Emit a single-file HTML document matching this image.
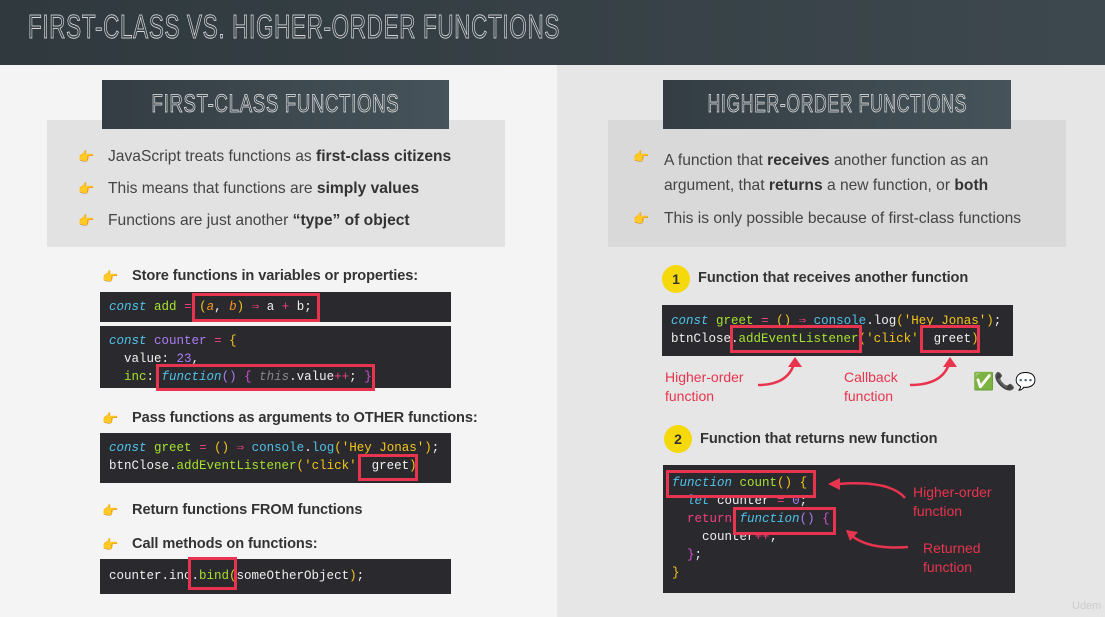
<!DOCTYPE html>
<html><head><meta charset="utf-8"><style>
*{margin:0;padding:0;box-sizing:border-box}
body{width:1105px;height:617px;overflow:hidden;position:relative;font-family:"Liberation Sans",sans-serif;background:#f4f4f4}
.abs{position:absolute}
.hdr{left:0;top:0;width:1105px;height:65px;background:linear-gradient(90deg,#2f393e,#3d484e)}
.ttl{font-family:"Liberation Sans Narrow","Liberation Sans",sans-serif;color:#3a444a;-webkit-text-stroke:0.8px #e8e8e8;letter-spacing:1px;white-space:nowrap;display:inline-block}
.right{left:557px;top:65px;width:548px;height:552px;background:#e6e6e6}
.gbox{background:#e2e2e2}
.tbox{background:linear-gradient(90deg,#333d43,#46535a);display:flex;align-items:center;justify-content:center}
.b{font-size:15.6px;color:#444;white-space:nowrap}
.b strong{color:#333}
.s{font-size:14.6px;color:#333;font-weight:bold;white-space:nowrap;letter-spacing:-0.1px}
.hand{font-size:13px;color:#f0a020}
.code{background:#2a2a2e;font-family:"Liberation Mono",monospace;font-size:12.5px;color:#f0f0f0;line-height:18px;white-space:pre;padding-left:9px}
.k{color:#4fc1e9;font-style:italic}.g{color:#a6e22e}.y{color:#f5c518}.p{color:#ab7cf5}.r{color:#f0407a}.o{color:#fd971f;font-style:italic}.gr{color:#888}.m{color:#d050d0}
.red{border:3px solid #e8344e;position:absolute}
.lbl{color:#e8344e;font-size:14px;line-height:19px}
.num{width:28px;height:28px;border-radius:50%;background:#f5d90a;color:#333;font-weight:bold;font-size:14px;display:flex;align-items:center;justify-content:center}
</style></head><body>
<div class="abs hdr"></div>
<div class="abs ttl" style="left:28px;top:8px;font-size:33px;transform:scaleX(0.68);transform-origin:left">FIRST-CLASS VS. HIGHER-ORDER FUNCTIONS</div>
<div class="abs right"></div>

<div class="abs gbox" style="left:47px;top:120px;width:458px;height:127px"></div>
<div class="abs tbox" style="left:102px;top:80px;width:347px;height:49px"><span class="ttl" style="font-size:25px;transform:scaleX(.74)">FIRST-CLASS FUNCTIONS</span></div>
<div class="abs gbox" style="left:608px;top:120px;width:458px;height:127px;background:#d9d9d9"></div>
<div class="abs tbox" style="left:663px;top:80px;width:348px;height:49px"><span class="ttl" style="font-size:25px;transform:scaleX(.70)">HIGHER-ORDER FUNCTIONS</span></div>

<div class="abs hand" style="left:78px;top:149px">👉</div><div class="abs b" style="left:108px;top:148px">JavaScript treats functions as <strong>first-class citizens</strong></div>
<div class="abs hand" style="left:78px;top:181px">👉</div><div class="abs b" style="left:108px;top:180px">This means that functions are <strong>simply values</strong></div>
<div class="abs hand" style="left:78px;top:213px">👉</div><div class="abs b" style="left:108px;top:212px">Functions are just another <strong>“type” of object</strong></div>

<div class="abs hand" style="left:633px;top:149px">👉</div><div class="abs b" style="left:664px;top:148px;line-height:25px">A function that <strong>receives</strong> another function as an<br>argument, that <strong>returns</strong> a new function, or <strong>both</strong></div>
<div class="abs hand" style="left:633px;top:211px">👉</div><div class="abs b" style="left:664px;top:210px">This is only possible because of first-class functions</div>

<div class="abs hand" style="left:102px;top:269px">👉</div><div class="abs s" style="left:132px;top:268px">Store functions in variables or properties:</div>
<div class="abs code" style="left:100px;top:292px;width:351px;height:30px;padding-top:6px"><span class="k">const</span> <span class="g">add</span> <span class="r">=</span> <span class="y">(</span><span class="o">a</span>, <span class="o">b</span><span class="y">)</span> <span class="r">⇒</span> a <span class="r">+</span> b;</div>
<div class="red" style="left:192px;top:293px;width:128px;height:29px"></div>
<div class="abs code" style="left:100px;top:326px;width:351px;height:62px;padding-top:6px"><span class="k">const</span> <span class="p">counter</span> <span class="r">=</span> <span class="y">{</span>
  value: <span class="p">23</span>,
  <span class="g">inc</span>: <span class="k">function</span><span class="p">()</span> <span class="m">{</span> <span class="gr" style="font-style:italic">this</span>.value<span class="r">++</span>; <span class="m">}</span></div>
<div class="red" style="left:156px;top:364px;width:219px;height:27px"></div>

<div class="abs hand" style="left:102px;top:411px">👉</div><div class="abs s" style="left:132px;top:410px">Pass functions as arguments to OTHER functions:</div>
<div class="abs code" style="left:100px;top:433px;width:351px;height:50px;padding-top:6px"><span class="k">const</span> <span class="g">greet</span> <span class="r">=</span> <span class="y">()</span> <span class="r">⇒</span> <span class="k" style="font-style:normal">console</span>.<span class="k" style="font-style:normal">log</span><span class="y">(</span><span class="y">'Hey Jonas'</span><span class="y">)</span>;
btnClose.<span class="g">addEventListener</span><span class="y">(</span><span class="y">'click'</span>, greet<span class="y">)</span></div>
<div class="red" style="left:358px;top:454px;width:60px;height:27px"></div>

<div class="abs hand" style="left:102px;top:503px">👉</div><div class="abs s" style="left:132px;top:502px">Return functions FROM functions</div>
<div class="abs hand" style="left:102px;top:537px">👉</div><div class="abs s" style="left:132px;top:536px">Call methods on functions:</div>
<div class="abs code" style="left:100px;top:559px;width:351px;height:35px;padding-top:8px">counter.inc.<span class="g">bind</span><span class="y">(</span>someOtherObject<span class="y">)</span>;</div>
<div class="red" style="left:188px;top:557px;width:49px;height:33px"></div>

<div class="abs num" style="left:662px;top:265px">1</div>
<div class="abs s" style="left:698px;top:270px">Function that receives another function</div>
<div class="abs code" style="left:662px;top:305px;width:351px;height:51px;padding-top:7px"><span class="k">const</span> <span class="g">greet</span> <span class="r">=</span> <span class="y">()</span> <span class="r">⇒</span> <span class="k" style="font-style:normal">console</span>.log<span class="y">(</span><span class="y">'Hey Jonas'</span><span class="y">)</span>;
btnClose.<span class="g">addEventListener</span><span class="y">(</span><span class="y">'click'</span>, greet<span class="y">)</span></div>
<div class="red" style="left:730px;top:325px;width:132px;height:28px"></div>
<div class="red" style="left:920px;top:325px;width:60px;height:28px"></div>
<div class="abs lbl" style="left:665px;top:368px">Higher-order<br>function</div>
<div class="abs lbl" style="left:844px;top:368px">Callback<br>function</div>
<svg class="abs" style="left:750px;top:355px" width="220" height="40"><g fill="none" stroke="#e8344e" stroke-width="2.5"><path d="M8 30 Q40 30 45 5"/><path d="M160 30 Q195 30 200 5"/></g><path d="M45 2 l-7 10 h14z M200 2 l-7 10 h14z" fill="#e8344e"/></svg>
<div class="abs" style="left:973px;top:372px;font-size:17px;white-space:nowrap">✅📞💬</div>

<div class="abs num" style="left:664px;top:425px">2</div>
<div class="abs s" style="left:700px;top:431px">Function that returns new function</div>
<div class="abs code" style="left:663px;top:465px;width:352px;height:128px;padding-top:9px;padding-left:9px"><span class="k">function</span> <span class="g">count</span><span class="y">()</span> <span class="y">{</span>
  <span class="k">let</span> counter <span class="r">=</span> <span class="p">0</span>;
  <span class="r">return</span> <span class="k">function</span><span class="p">()</span> <span class="m">{</span>
    counter<span class="r">++</span>;
  <span class="m">}</span>;
<span class="y">}</span></div>
<div class="red" style="left:666px;top:470px;width:150px;height:28px"></div>
<div class="red" style="left:733px;top:507px;width:103px;height:28px"></div>
<div class="abs lbl" style="left:913px;top:483px">Higher-order<br>function</div>
<div class="abs lbl" style="left:923px;top:539px">Returned<br>function</div>
<svg class="abs" style="left:820px;top:470px" width="100" height="100"><g fill="none" stroke="#e8344e" stroke-width="2.5"><path d="M85 28 Q70 10 18 14"/><path d="M88 77 Q50 80 32 66"/></g><path d="M8 14 l12 -6 v12z M26 60 l12 2 -8 9z" fill="#e8344e"/></svg>
<div class="abs" style="left:1072px;top:600px;font-size:11px;color:#ccc">Udem</div>
</body></html>
